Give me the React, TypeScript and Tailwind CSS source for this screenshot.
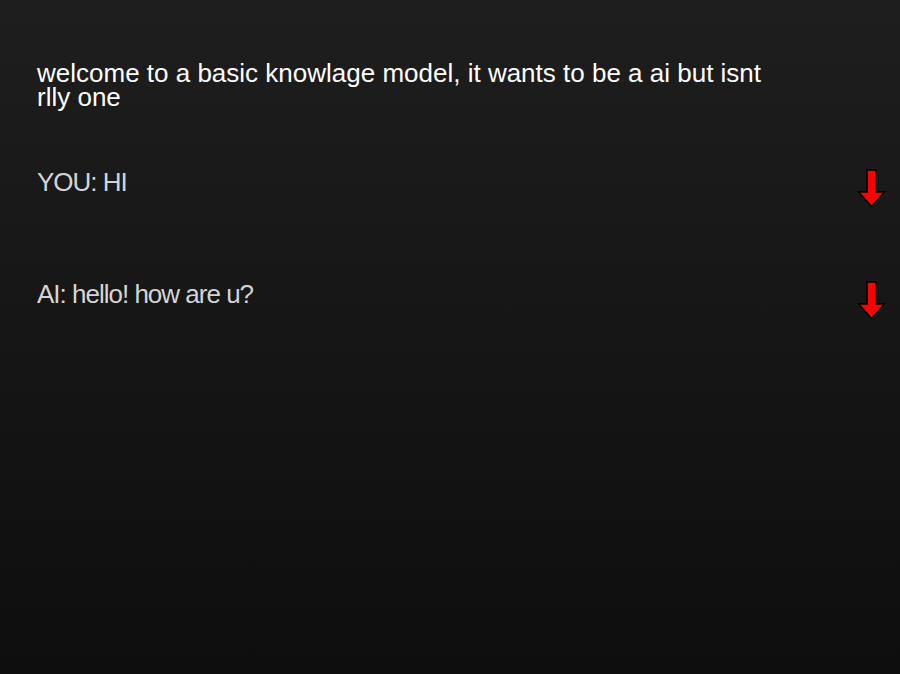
import React from 'react';

const messages = [
  { id: 1, who: 'YOU', text: 'HI' },
  { id: 2, who: 'AI', text: 'hello! how are u?' },
];

const DownArrow: React.FC = () => (
  <svg width="29" height="40" viewBox="0 0 29 40" className="shrink-0 -mt-[1px]">
    <path
      d="M10 1 H19 V23 H27.5 L14.5 37.5 L1.5 23 H10 Z"
      fill="#ff0000"
      stroke="#000000"
      strokeWidth="1.5"
      strokeLinejoin="miter"
    />
  </svg>
);

const App: React.FC = () => {
  return (
    <div className="min-h-screen w-full bg-gradient-to-b from-[#1e1e1e] to-[#0e0e0e] font-['Liberation_Sans',Arial,sans-serif]">
      <div className="pl-[37px] pr-[14px] pt-[61px]">
        {/* intro */}
        <p className="max-w-[725px] text-[26px] leading-[24px] tracking-[0px] text-white">
          welcome to a basic knowlage model, it wants to be a ai but isnt rlly one
        </p>

        {/* chat */}
        <div className="mt-[61px] flex flex-col gap-[72px]">
          {messages.map((m) => (
            <div key={m.id} className="flex h-[40px] items-start justify-between">
              <p className="text-[26px] leading-[24px] tracking-[-1px] text-[#d4d4d4]">
                {m.who}: {m.text}
              </p>
              <DownArrow />
            </div>
          ))}
        </div>
      </div>
    </div>
  );
};

export default App;
